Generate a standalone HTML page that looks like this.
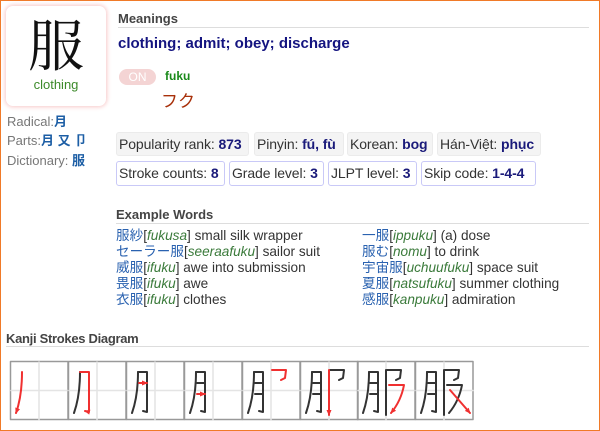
<!DOCTYPE html>
<html><head><meta charset="utf-8"><style>
*{margin:0;padding:0;box-sizing:border-box}
html,body{width:600px;height:431px;overflow:hidden;background:#fff}
body{position:relative;font-family:"Liberation Sans","Noto Sans CJK JP",sans-serif;border:1px solid #f07a28;}
.abs{position:absolute;white-space:nowrap}
.kbox{left:5px;top:5px;width:100px;height:100px;border-radius:7px;box-shadow:0 0 4px 1px #f8c8c8;background:#fff}
.big{left:0;width:100px;top:2px;text-align:center;font-family:"Noto Serif CJK SC","Noto Serif CJK JP",serif;font-size:56px;line-height:70px;color:#111}
.cl{left:0;width:100px;top:71px;text-align:center;font-size:13px;color:#3c8a2a}
.lab{font-size:13px;color:#777;left:6px}
.lab b{color:#1c5ea5}
.h{font-size:13px;font-weight:bold;color:#444}
.line{height:1px;background:#ddd}
.box{position:absolute;height:24px;font-size:14px;color:#333;line-height:22px;padding:0 2px;border-radius:3px;white-space:nowrap;overflow:hidden;letter-spacing:-0.1px}
.g{background:#f4f4f4;border:1px solid #ebebeb}
.p{background:#fff;border:1px solid #c9c9f7}
.box b{color:#1a1a7a}
.w{font-size:13.6px;color:#333;line-height:16px}
.w .j{color:#2a62b0}.w i{color:#3a7a3a}
</style></head><body>
<div class="abs kbox"><div class="abs big">服</div><div class="abs cl">clothing</div></div>
<div class="abs lab" style="top:110px">Radical:<b>月</b></div>
<div class="abs lab" style="top:129px">Parts:<b>月 又 卩</b></div>
<div class="abs lab" style="top:149px">Dictionary: <b>服</b></div>

<div class="abs h" style="left:117px;top:10px">Meanings</div>
<div class="abs line" style="left:117px;top:26px;width:471px"></div>
<div class="abs" style="left:117px;top:34px;font-size:15px;font-weight:bold;color:#141480">clothing; admit; obey; discharge</div>
<div class="abs" style="left:118px;top:68px;width:37px;height:16px;border-radius:8px;background:#f4d4d4;color:#fff;font-size:12px;text-align:center;line-height:16px">ON</div>
<div class="abs" style="left:164px;top:68px;font-size:12px;font-weight:bold;color:#1a8a1a">fuku</div>
<div class="abs" style="left:160px;top:86px;font-size:17px;color:#a8300a">フク</div>

<div class="box g" style="left:115px;top:131px;width:133px">Popularity rank: <b>873</b></div>
<div class="box g" style="left:253px;top:131px;width:90px">Pinyin: <b>fú, fù</b></div>
<div class="box g" style="left:346px;top:131px;width:86px">Korean: <b>bog</b></div>
<div class="box g" style="left:436px;top:131px;width:104px">Hán-Việt: <b>phục</b></div>
<div class="box p" style="left:115px;top:160px;width:109px;height:25px">Stroke counts: <b>8</b></div>
<div class="box p" style="left:228px;top:160px;width:95px;height:25px">Grade level: <b>3</b></div>
<div class="box p" style="left:327px;top:160px;width:89px;height:25px">JLPT level: <b>3</b></div>
<div class="box p" style="left:420px;top:160px;width:115px;height:25px">Skip code: <b>1-4-4</b></div>

<div class="abs h" style="left:115px;top:206px">Example Words</div>
<div class="abs line" style="left:115px;top:222px;width:473px"></div>
<div class="abs w" style="left:115px;top:227px">
<div><span class="j">服紗</span>[<i>fukusa</i>] small silk wrapper</div>
<div><span class="j">セーラー服</span>[<i>seeraafuku</i>] sailor suit</div>
<div><span class="j">威服</span>[<i>ifuku</i>] awe into submission</div>
<div><span class="j">畏服</span>[<i>ifuku</i>] awe</div>
<div><span class="j">衣服</span>[<i>ifuku</i>] clothes</div></div>
<div class="abs w" style="left:361px;top:227px">
<div><span class="j">一服</span>[<i>ippuku</i>] (a) dose</div>
<div><span class="j">服む</span>[<i>nomu</i>] to drink</div>
<div><span class="j">宇宙服</span>[<i>uchuufuku</i>] space suit</div>
<div><span class="j">夏服</span>[<i>natsufuku</i>] summer clothing</div>
<div><span class="j">感服</span>[<i>kanpuku</i>] admiration</div></div>

<div class="abs h" style="left:5px;top:330px;letter-spacing:-0.3px">Kanji Strokes Diagram</div>
<div class="abs line" style="left:5px;top:345px;width:583px"></div>

<svg class="abs" style="left:-1px;top:-1px" width="600" height="431" viewBox="0 0 600 431">
<defs>
<marker id="a" markerUnits="userSpaceOnUse" markerWidth="6" markerHeight="6" refX="5" refY="3" orient="auto"><path d="M0,0.5L6,3L0,5.5z" fill="#f03030"/></marker>
<g id="grid"><rect x="0.5" y="0.5" width="57.5" height="58" fill="none" stroke="#999" stroke-width="1.5"/><path d="M29,1V59M1,29.5H58" stroke="#e4e4e4" stroke-width="1.5"/></g>
<path id="s1" d="M12,11Q12,35 6,52"/>
<path id="s2" d="M12,11H21V51L17,50"/>
<path id="s3" d="M13,22H21"/>
<path id="s4" d="M13,33H21"/>
<path id="s5" d="M30,9H44L43,17L39,19"/>
<path id="s6" d="M29,9V54"/>
<path id="s7" d="M32,24H47Q44,40 34,52"/>
<path id="s8" d="M35,29L55,52"/>
</defs>
<g fill="none" stroke-width="2" stroke-linecap="round" stroke-linejoin="round">
<g transform="translate(10,361)"><use href="#grid"/><use href="#s1" stroke="#f03030" marker-end="url(#a)"/></g>
<g transform="translate(68,361)"><use href="#grid"/><use href="#s1" stroke="#333"/><use href="#s2" stroke="#f03030" marker-end="url(#a)"/></g>
<g transform="translate(126,361)"><use href="#grid"/><use href="#s1" stroke="#333"/><use href="#s2" stroke="#333"/><use href="#s3" stroke="#f03030" marker-end="url(#a)"/></g>
<g transform="translate(184,361)"><use href="#grid"/><use href="#s1" stroke="#333"/><use href="#s2" stroke="#333"/><use href="#s3" stroke="#333"/><use href="#s4" stroke="#f03030" marker-end="url(#a)"/></g>
<g transform="translate(242,361)"><use href="#grid"/><use href="#s1" stroke="#333"/><use href="#s2" stroke="#333"/><use href="#s3" stroke="#333"/><use href="#s4" stroke="#333"/><use href="#s5" stroke="#f03030"/></g>
<g transform="translate(300,361)"><use href="#grid"/><use href="#s1" stroke="#333"/><use href="#s2" stroke="#333"/><use href="#s3" stroke="#333"/><use href="#s4" stroke="#333"/><use href="#s5" stroke="#333"/><use href="#s6" stroke="#f03030" marker-end="url(#a)"/></g>
<g transform="translate(357,361)"><use href="#grid"/><use href="#s1" stroke="#333"/><use href="#s2" stroke="#333"/><use href="#s3" stroke="#333"/><use href="#s4" stroke="#333"/><use href="#s5" stroke="#333"/><use href="#s6" stroke="#333"/><use href="#s7" stroke="#f03030" marker-end="url(#a)"/></g>
<g transform="translate(415,361)"><use href="#grid"/><use href="#s1" stroke="#333"/><use href="#s2" stroke="#333"/><use href="#s3" stroke="#333"/><use href="#s4" stroke="#333"/><use href="#s5" stroke="#333"/><use href="#s6" stroke="#333"/><use href="#s7" stroke="#333"/><use href="#s8" stroke="#f03030" marker-end="url(#a)"/></g>
</g>
</svg>
</body></html>
